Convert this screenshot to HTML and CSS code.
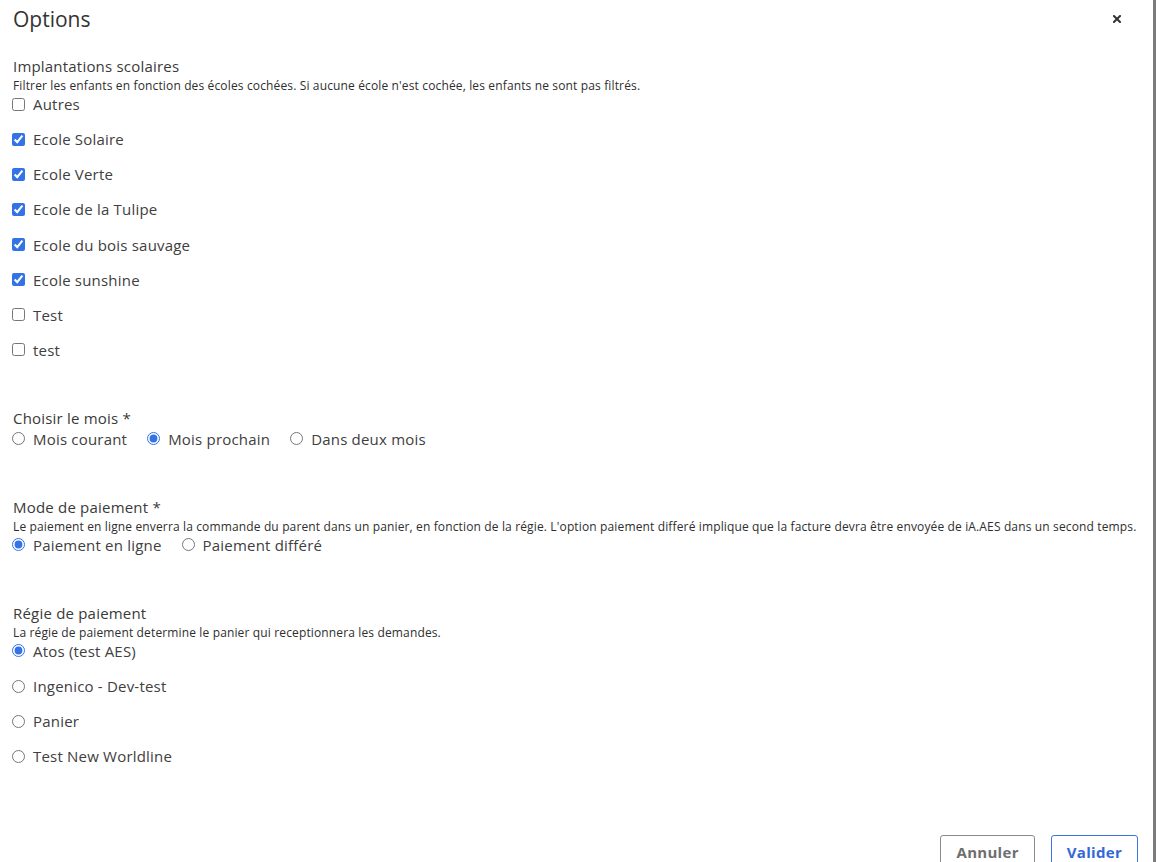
FILE: index.html
```html
<!DOCTYPE html>
<html lang="fr">
<head>
<meta charset="utf-8">
<title>Options</title>
<link rel="stylesheet" href="styles.css">
</head>
<body>
<div class="dialog">
  <header class="dialog-header">
    <h1 class="dialog-title">Options</h1>
    <button class="close" type="button" aria-label="Fermer">
      <svg width="8" height="8" viewBox="0 0 8 8"><path d="M1 1L7 7M7 1L1 7" stroke="#333" stroke-width="2" stroke-linecap="square"/></svg>
    </button>
  </header>

  <section class="field field-first">
    <div class="field-label">Implantations scolaires</div>
    <div class="field-desc">Filtrer les enfants en fonction des écoles cochées. Si aucune école n'est cochée, les enfants ne sont pas filtrés.</div>
    <div class="options options-col">
      <label class="opt"><input type="checkbox"><span>Autres</span></label>
      <label class="opt"><input type="checkbox" checked><span>Ecole Solaire</span></label>
      <label class="opt"><input type="checkbox" checked><span>Ecole Verte</span></label>
      <label class="opt"><input type="checkbox" checked><span>Ecole de la Tulipe</span></label>
      <label class="opt"><input type="checkbox" checked><span>Ecole du bois sauvage</span></label>
      <label class="opt"><input type="checkbox" checked><span>Ecole sunshine</span></label>
      <label class="opt"><input type="checkbox"><span>Test</span></label>
      <label class="opt"><input type="checkbox"><span>test</span></label>
    </div>
  </section>

  <section class="field">
    <div class="field-label">Choisir le mois *</div>
    <div class="options options-row options-tight">
      <label class="opt"><input type="radio" name="mois"><span>Mois courant</span></label>
      <label class="opt"><input type="radio" name="mois" checked><span>Mois prochain</span></label>
      <label class="opt"><input type="radio" name="mois"><span>Dans deux mois</span></label>
    </div>
  </section>

  <section class="field">
    <div class="field-label">Mode de paiement *</div>
    <div class="field-desc">Le paiement en ligne enverra la commande du parent dans un panier, en fonction de la régie. L'option paiement differé implique que la facture devra être envoyée de iA.AES dans un second temps.</div>
    <div class="options options-row">
      <label class="opt"><input type="radio" name="mode" checked><span>Paiement en ligne</span></label>
      <label class="opt"><input type="radio" name="mode"><span>Paiement différé</span></label>
    </div>
  </section>

  <section class="field">
    <div class="field-label">Régie de paiement</div>
    <div class="field-desc">La régie de paiement determine le panier qui receptionnera les demandes.</div>
    <div class="options options-col">
      <label class="opt"><input type="radio" name="regie" checked><span>Atos (test AES)</span></label>
      <label class="opt"><input type="radio" name="regie"><span>Ingenico - Dev-test</span></label>
      <label class="opt"><input type="radio" name="regie"><span>Panier</span></label>
      <label class="opt"><input type="radio" name="regie"><span>Test New Worldline</span></label>
    </div>
  </section>

  <footer class="dialog-footer">
    <button class="btn btn-cancel" type="button">Annuler</button>
    <button class="btn btn-primary" type="button">Valider</button>
  </footer>
</div>
</body>
</html>
```

FILE: styles.css
```css
html, body {
  margin: 0;
  padding: 0;
  height: 862px;
  overflow: hidden;
  background: #ffffff;
}

body {
  font-family: "Open Sans", "Noto Sans", sans-serif;
  color: #404040;
}

.dialog {
  width: 1156px;
  height: 862px;
  box-sizing: border-box;
  border-right: 3px solid #7c7c7c;
  padding: 0 15px 0 12px;
  overflow: hidden;
}

.dialog-header {
  display: flex;
  justify-content: space-between;
  align-items: flex-start;
  padding-top: 5px;
}

.dialog-title {
  margin: 0 0 0 1px;
  font-size: 21px;
  line-height: 28px;
  font-weight: 400;
  color: #333333;
}

.close {
  border: 0;
  background: none;
  padding: 0;
  margin: 10px 17px 0 0;
  width: 8px;
  height: 8px;
  display: flex;
  cursor: pointer;
}

.field {
  margin-top: 50px;
}

.field-first {
  margin-top: 25px;
}

.field-label {
  font-size: 15px;
  line-height: 16px;
  letter-spacing: 0.2px;
  color: #3a3a3a;
  padding-left: 1px;
}

.field-desc {
  font-size: 12px;
  line-height: 14px;
  letter-spacing: 0.14px;
  white-space: nowrap;
  margin-top: 5px;
  color: #2e2e2e;
  padding-left: 1px;
}

.options {
  margin-top: 1px;
  display: flex;
}

.options-tight {
  margin-top: 3px;
}

.options-col {
  flex-direction: column;
  gap: 15.15px;
}

.options-row {
  flex-direction: row;
  gap: 20px;
}

.opt {
  display: flex;
  align-items: center;
  gap: 8px;
  font-size: 15px;
  line-height: 20px;
  height: 20px;
  letter-spacing: 0.2px;
  color: #404040;
}

.opt input {
  margin: 0;
  width: 13px;
  height: 13px;
  accent-color: #3373e6;
}

.dialog-footer {
  display: flex;
  justify-content: flex-end;
  gap: 16px;
  margin-top: 69px;
}

.btn {
  font-family: "Open Sans", "Noto Sans", sans-serif;
  font-size: 15px;
  font-weight: 700;
  line-height: 20px;
  letter-spacing: 0.3px;
  padding: 6px 15px;
  background: #ffffff;
  border-radius: 3px;
  cursor: pointer;
}

.btn-cancel {
  border: 1px solid #8a8a8a;
  color: #6e6e6e;
}

.btn-primary {
  border: 1px solid #3b73e2;
  color: #3468d6;
}
```
